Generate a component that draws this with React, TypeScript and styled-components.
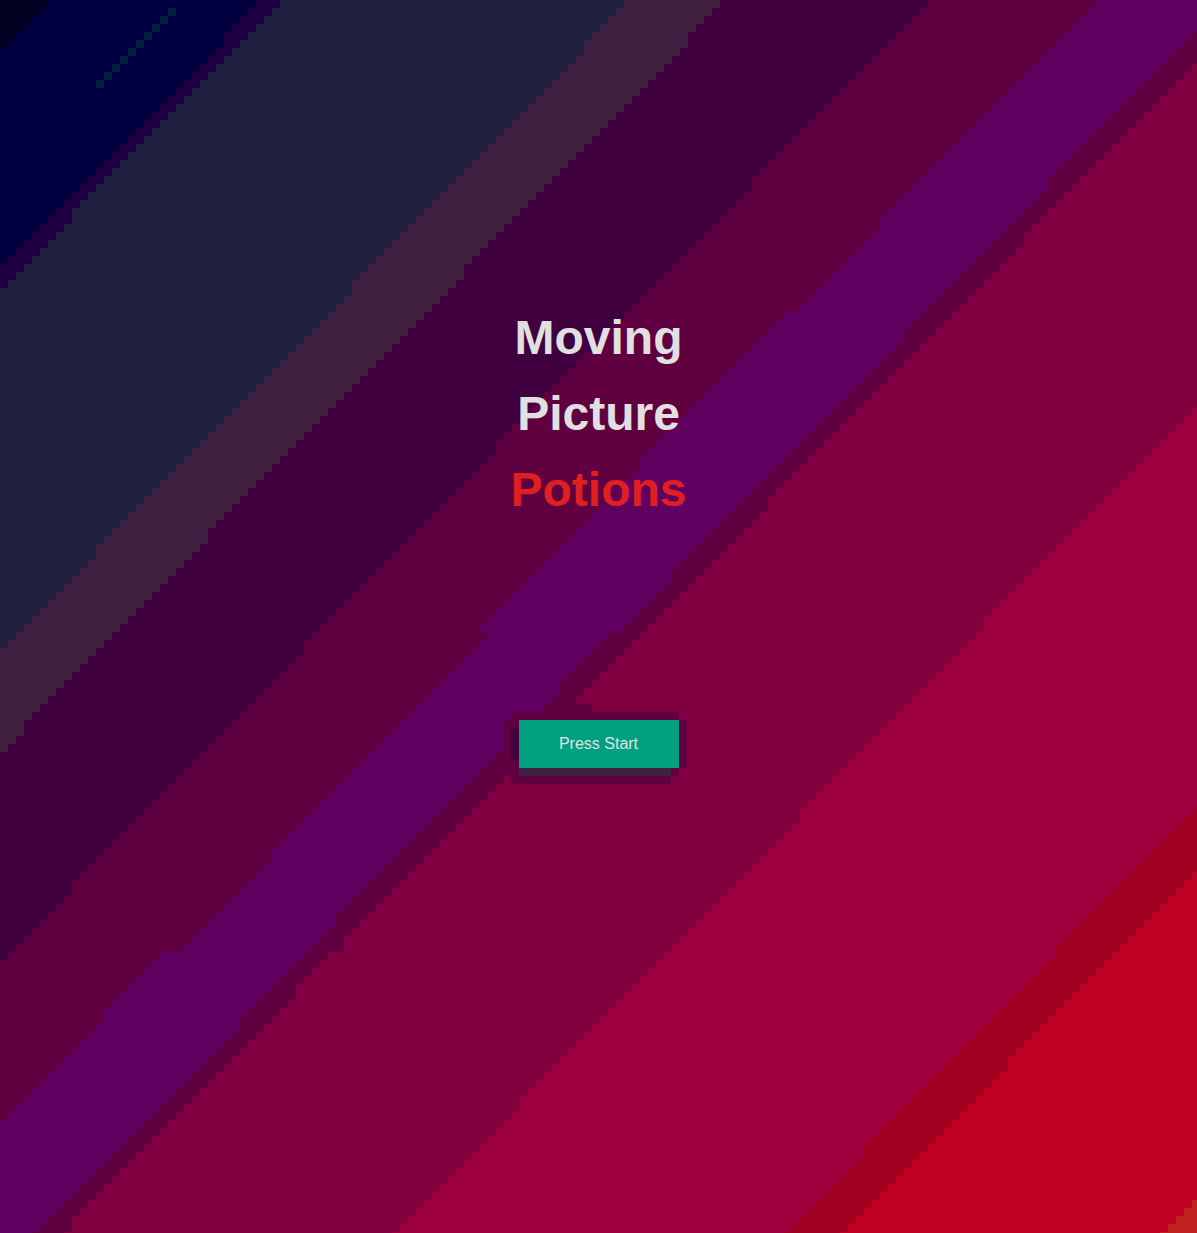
import React from "react";
import styled, { createGlobalStyle } from "styled-components";

const GlobalStyle = createGlobalStyle`
  *, *::before, *::after { box-sizing: border-box; }
  body {
    margin: 0;
    background: #800040;
    font-family: "Liberation Sans", Arial, Helvetica, sans-serif;
  }
`;

/* The backdrop is a diagonal gradient drawn in coarse square blocks. */
const CELL = 8;
const COLS = 150;
const ROWS = 155;

/* start: diagonal (column + row) where the band begins.
   steps: [row, change] pairs where its edge jogs sideways. */
type Band = { color: string; start: number; steps: [number, number][] };

const bands: Band[] = [
  { color: "#000040", start: 6, steps: [] },
  { color: "#200040", start: 32, steps: [[5, 1]] },
  { color: "#202040", start: 35, steps: [[27, 1]] },
  { color: "#402040", start: 78, steps: [[6, 1], [36, 1], [69, 1]] },
  { color: "#400040", start: 90, steps: [[5, 1], [34, 1], [67, 1], [91, 1]] },
  { color: "#600040", start: 116, steps: [[23, 1], [56, 1], [81, 1], [111, 1]] },
  {
    color: "#600060",
    start: 137,
    steps: [[28, 1], [39, -1], [58, 1], [79, 2], [107, 1], [119, -2], [127, 1]],
  },
  {
    color: "#600040",
    start: 153,
    steps: [[23, 1], [42, 1], [72, 1], [79, -1], [86, 1], [115, 1], [128, 1]],
  },
  {
    color: "#800040",
    start: 157,
    steps: [[30, 1], [63, 1], [88, 3], [89, -2], [118, 1], [119, -1], [124, 1], [153, 1]],
  },
  { color: "#a00040", start: 200, steps: [[78, 1], [102, 1], [138, 1]] },
  { color: "#a00020", start: 250, steps: [[119, 1], [144, 1]] },
  { color: "#c00020", start: 258, steps: [[133, 1]] },
  { color: "#c02020", start: 299, steps: [] },
];

function bandPath({ start, steps }: Band): string {
  let d = "";
  for (let row = 0; row < ROWS; row += 1) {
    const edge = steps.reduce((sum, [at, change]) => (row >= at ? sum + change : sum), start);
    const col = Math.max(0, edge - row);
    if (col < COLS) {
      d += `M${col * CELL} ${row * CELL}H${COLS * CELL}v${CELL}H${col * CELL}z`;
    }
  }
  return d;
}

const glint = Array.from({ length: 10 }, (_, i) => ({ col: 12 + i, row: 10 - i }));

const Page = styled.main`
  position: relative;
  display: flex;
  flex-direction: column;
  align-items: center;
  gap: 192px;
  min-height: 100vh;
  padding: 300px 24px 48px;
  overflow: hidden;
`;

const Backdrop = styled.svg`
  position: absolute;
  inset: 0;
  z-index: -1;
  width: 100%;
  height: 100%;
`;

const Title = styled.h1`
  margin: 0;
  color: #e0e0e0;
  font-size: 48px;
  font-weight: 700;
  line-height: 76px;
  text-align: center;
`;

const TitleLine = styled.span<{ $accent?: boolean }>`
  display: block;
  color: ${({ $accent }) => ($accent ? "#e02020" : "inherit")};
`;

const StartButton = styled.button`
  min-width: 160px;
  height: 48px;
  padding: 0 32px;
  border: 0;
  border-radius: 0;
  background: #00a080;
  color: #e0e0e0;
  font-family: inherit;
  font-size: 16px;
  font-weight: 400;
  line-height: 24px;
  cursor: pointer;
  box-shadow:
    -16px 0 0 -8px #400040,
    -4px 12px 0 -4px #402040,
    8px 0 0 0 #600040,
    0 8px 0 0 #600040,
    0 -8px 0 0 #600040,
    -8px -8px 0 0 #600040,
    -8px 16px 0 0 #600040,
    -16px 0 0 0 #600040;
`;

export default function App() {
  return (
    <>
      <GlobalStyle />
      <Page>
        <Backdrop
          viewBox="0 0 1197 1233"
          preserveAspectRatio="xMidYMid slice"
          shapeRendering="crispEdges"
          aria-hidden="true"
        >
          <rect width={COLS * CELL} height={ROWS * CELL} fill="#000020" />
          {bands.map((band) => (
            <path key={band.start} d={bandPath(band)} fill={band.color} />
          ))}
          {glint.map(({ col, row }) => (
            <rect key={col} x={col * CELL} y={row * CELL} width={CELL} height={CELL} fill="#002040" />
          ))}
        </Backdrop>
        <Title>
          <TitleLine>Moving</TitleLine>
          <TitleLine>Picture</TitleLine>
          <TitleLine $accent>Potions</TitleLine>
        </Title>
        <StartButton type="button">Press Start</StartButton>
      </Page>
    </>
  );
}
